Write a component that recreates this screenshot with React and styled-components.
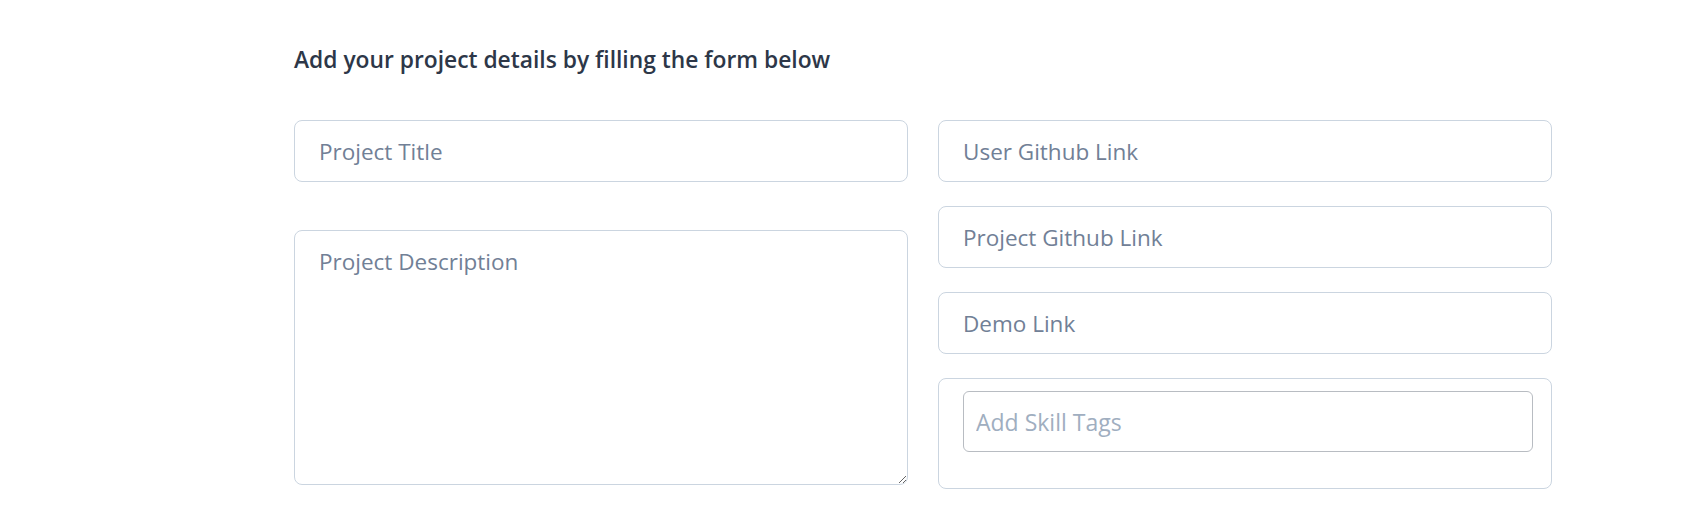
import React from "react";
import styled, { createGlobalStyle } from "styled-components";

const GlobalStyle = createGlobalStyle`
  body {
    margin: 0;
    background: #ffffff;
    font-family: "Open Sans", "Noto Sans", sans-serif;
  }
`;

const Page = styled.div`
  padding: 41px 0 40px 294px;
`;

const Heading = styled.h2`
  margin: 0 0 41px;
  font-size: 22.8px;
  line-height: 38px;
  font-weight: 600;
  color: #2d3748;
`;

const Form = styled.form`
  width: 1258px;
  display: grid;
  grid-template-columns: 1fr 1fr;
  column-gap: 30px;
  align-items: start;
`;

const Column = styled.div`
  display: flex;
  flex-direction: column;
  gap: ${(p) => p.$gap}px;
`;

const Field = styled.input`
  box-sizing: border-box;
  width: 100%;
  height: 62px;
  padding: 0 24px;
  border: 1px solid #cbd5e0;
  border-radius: 8px;
  font-family: inherit;
  font-size: 22.5px;
  color: #2d3748;
  outline: none;
  &::placeholder {
    color: #718096;
  }
`;

const Description = styled.textarea`
  box-sizing: border-box;
  width: 100%;
  height: 255px;
  padding: 16px 24px;
  border: 1px solid #cbd5e0;
  border-radius: 8px;
  font-family: inherit;
  font-size: 22.5px;
  line-height: 30px;
  color: #2d3748;
  outline: none;
  &::placeholder {
    color: #718096;
  }
`;

const TagBox = styled.div`
  box-sizing: border-box;
  height: 111px;
  padding: 12px 18px 0 24px;
  border: 1px solid #cbd5e0;
  border-radius: 8px;
`;

const TagInput = styled.input`
  box-sizing: border-box;
  width: 100%;
  height: 61px;
  padding: 0 12px;
  border: 1px solid #b8bcc2;
  border-radius: 6px;
  font-family: inherit;
  font-size: 23px;
  color: #2d3748;
  outline: none;
  &::placeholder {
    color: #a0aec0;
  }
`;

const App = () => {
  return (
    <>
      <GlobalStyle />
      <Page>
        <Heading>Add your project details by filling the form below</Heading>
        <Form>
          <Column $gap={48}>
            <Field placeholder="Project Title" />
            <Description placeholder="Project Description" />
          </Column>
          <Column $gap={24}>
            <Field placeholder="User Github Link" />
            <Field placeholder="Project Github Link" />
            <Field placeholder="Demo Link" />
            <TagBox>
              <TagInput placeholder="Add Skill Tags" />
            </TagBox>
          </Column>
        </Form>
      </Page>
    </>
  );
};

export default App;
